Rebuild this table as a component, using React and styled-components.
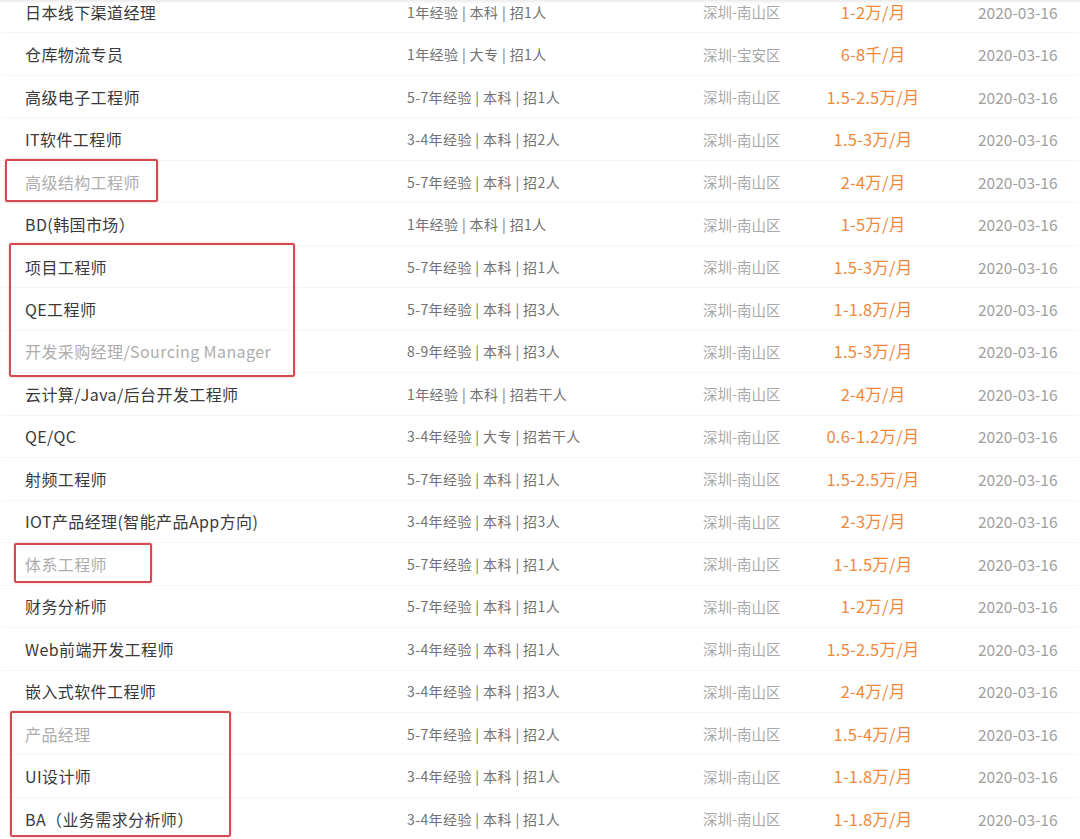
import React from "react";
import styled, { createGlobalStyle } from "styled-components";

const Global = createGlobalStyle`
  html, body { margin: 0; padding: 0; background: #fff; }
  body { font-family: "Noto Sans CJK SC", "Noto Sans", sans-serif; overflow: hidden; }
`;

const Page = styled.div`
  position: relative;
  width: 1080px;
  height: 839px;
  overflow: hidden;
  background: #fff;
  box-shadow: inset 0 4px 4px -3px rgba(0, 0, 0, 0.12);
`;

const List = styled.div`
  margin-top: -9px;
  display: flex;
  flex-direction: column;
`;

const Row = styled.div`
  display: grid;
  grid-template-columns: 382px 296px 97px 146px 1fr;
  align-items: center;
  height: 42.47px;
  padding-left: 25px;
  border-bottom: 1px solid #f7f7f7;
  box-sizing: border-box;
`;

const Title = styled.div`
  font-size: 16px;
  letter-spacing: 0.4px;
  color: ${(p) => (p.$dim ? "#adadad" : "#3a3a3a")};
  white-space: nowrap;
`;

const Req = styled.div`
  font-size: 14px;
  letter-spacing: 0.4px;
  color: #727272;
  white-space: nowrap;
`;

const Loc = styled.div`
  font-size: 14.5px;
  color: #a8a8a8;
  white-space: nowrap;
`;

const Salary = styled.div`
  font-size: 16.5px;
  letter-spacing: 0.2px;
  color: #f0883c;
  text-align: center;
  white-space: nowrap;
`;

const DateCell = styled.div`
  font-size: 15.5px;
  color: #a0a0a0;
  padding-left: 32px;
  white-space: nowrap;
`;

const Mark = styled.div`
  position: absolute;
  left: ${(p) => p.$x}px;
  top: ${(p) => p.$y}px;
  width: ${(p) => p.$w}px;
  height: ${(p) => p.$h}px;
  border: 2px solid #d44a50;
  border-radius: 2px;
  box-sizing: border-box;
  box-shadow: 0 0 2px rgba(214, 69, 75, 0.45);
  pointer-events: none;
`;

const NS = "深圳-南山区";

const jobs = [
  ["日本线下渠道经理", "1年经验 | 本科 | 招1人", NS, "1-2万/月"],
  ["仓库物流专员", "1年经验 | 大专 | 招1人", "深圳-宝安区", "6-8千/月"],
  ["高级电子工程师", "5-7年经验 | 本科 | 招1人", NS, "1.5-2.5万/月"],
  ["IT软件工程师", "3-4年经验 | 本科 | 招2人", NS, "1.5-3万/月"],
  ["高级结构工程师", "5-7年经验 | 本科 | 招2人", NS, "2-4万/月", true],
  ["BD(韩国市场）", "1年经验 | 本科 | 招1人", NS, "1-5万/月"],
  ["项目工程师", "5-7年经验 | 本科 | 招1人", NS, "1.5-3万/月"],
  ["QE工程师", "5-7年经验 | 本科 | 招3人", NS, "1-1.8万/月"],
  ["开发采购经理/Sourcing Manager", "8-9年经验 | 本科 | 招3人", NS, "1.5-3万/月", true],
  ["云计算/Java/后台开发工程师", "1年经验 | 本科 | 招若干人", NS, "2-4万/月"],
  ["QE/QC", "3-4年经验 | 大专 | 招若干人", NS, "0.6-1.2万/月"],
  ["射频工程师", "5-7年经验 | 本科 | 招1人", NS, "1.5-2.5万/月"],
  ["IOT产品经理(智能产品App方向)", "3-4年经验 | 本科 | 招3人", NS, "2-3万/月"],
  ["体系工程师", "5-7年经验 | 本科 | 招1人", NS, "1-1.5万/月", true],
  ["财务分析师", "5-7年经验 | 本科 | 招1人", NS, "1-2万/月"],
  ["Web前端开发工程师", "3-4年经验 | 本科 | 招1人", NS, "1.5-2.5万/月"],
  ["嵌入式软件工程师", "3-4年经验 | 本科 | 招3人", NS, "2-4万/月"],
  ["产品经理", "5-7年经验 | 本科 | 招2人", NS, "1.5-4万/月", true],
  ["UI设计师", "3-4年经验 | 本科 | 招1人", NS, "1-1.8万/月"],
  ["BA（业务需求分析师）", "3-4年经验 | 本科 | 招1人", NS, "1-1.8万/月"],
];

const marks = [
  { x: 5, y: 159, w: 153, h: 43 },
  { x: 9, y: 243, w: 286, h: 134 },
  { x: 14, y: 543, w: 138, h: 40 },
  { x: 10, y: 711, w: 221, h: 126 },
];

export default function App() {
  return (
    <>
      <Global />
      <Page>
        <List>
          {jobs.map(([t, r, l, s, dim], i) => (
            <Row key={i}>
              <Title $dim={dim}>{t}</Title>
              <Req>{r}</Req>
              <Loc>{l}</Loc>
              <Salary>{s}</Salary>
              <DateCell>2020-03-16</DateCell>
            </Row>
          ))}
        </List>
        {marks.map((m, i) => (
          <Mark key={i} $x={m.x} $y={m.y} $w={m.w} $h={m.h} />
        ))}
      </Page>
    </>
  );
}
